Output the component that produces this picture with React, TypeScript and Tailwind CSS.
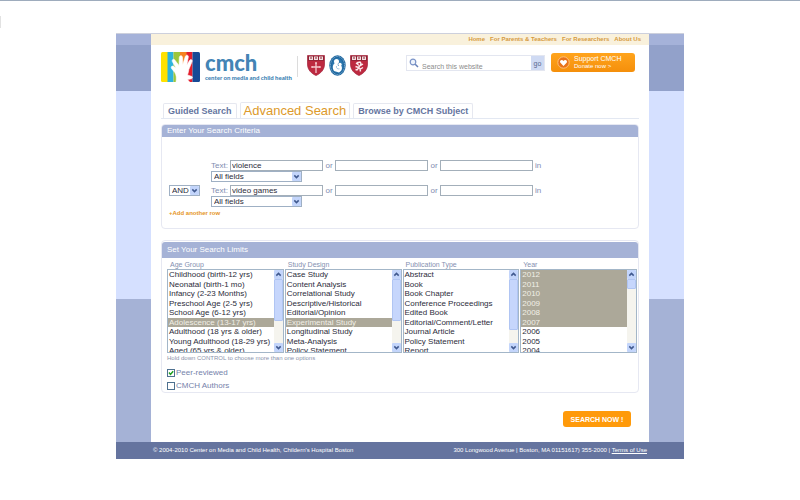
import { useState } from "react";
import type { ReactNode } from "react";

interface LimitListProps {
  id: string;
  label: string;
  options: string[];
  initial: string[];
  thumbClass: string;
}

const navLinks = ["Home", "For Parents & Teachers", "For Researchers", "About Us"];

const limits: LimitListProps[] = [
  {
    id: "age-group",
    label: "Age Group",
    options: [
      "Childhood (birth-12 yrs)",
      "Neonatal (birth-1 mo)",
      "Infancy (2-23 Months)",
      "Preschool Age (2-5 yrs)",
      "School Age (6-12 yrs)",
      "Adolescence (13-17 yrs)",
      "Adulthood (18 yrs & older)",
      "Young Adulthood (18-29 yrs)",
      "Aged (65 yrs & older)",
    ],
    initial: ["Adolescence (13-17 yrs)"],
    thumbClass: "h-[42px]",
  },
  {
    id: "study-design",
    label: "Study Design",
    options: [
      "Case Study",
      "Content Analysis",
      "Correlational Study",
      "Descriptive/Historical",
      "Editorial/Opinion",
      "Experimental Study",
      "Longitudinal Study",
      "Meta-Analysis",
      "Policy Statement",
    ],
    initial: ["Experimental Study"],
    thumbClass: "h-[42px]",
  },
  {
    id: "publication-type",
    label: "Publication Type",
    options: [
      "Abstract",
      "Book",
      "Book Chapter",
      "Conference Proceedings",
      "Edited Book",
      "Editorial/Comment/Letter",
      "Journal Article",
      "Policy Statement",
      "Report",
    ],
    initial: [],
    thumbClass: "h-[51px]",
  },
  {
    id: "year",
    label: "Year",
    options: ["2012", "2011", "2010", "2009", "2008", "2007", "2006", "2005", "2004"],
    initial: ["2012", "2011", "2010", "2009", "2008", "2007"],
    thumbClass: "h-[10px]",
  },
];

function Chevron({ up = false }: { up?: boolean }) {
  return (
    <svg viewBox="0 0 9 9" className="h-[9px] w-[9px] shrink-0" aria-hidden="true">
      <rect width="9" height="9" rx="1" fill="#c3d5fb" />
      <path
        d={up ? "M2.3 5.6 4.5 3.4 6.7 5.6" : "M2.3 3.4 4.5 5.6 6.7 3.4"}
        fill="none"
        stroke="#40598f"
        strokeWidth="1.5"
      />
    </svg>
  );
}

function DropDown({ label, options, widthClass }: { label: string; options: string[]; widthClass: string }) {
  return (
    <div className={`relative h-[11px] ${widthClass}`}>
      <select
        aria-label={label}
        className="block h-full w-full appearance-none border border-[#9fb0c4] bg-white pl-[2px] text-[8px] leading-[9px] text-[#2c2c3a]"
      >
        {options.map((o) => (
          <option key={o}>{o}</option>
        ))}
      </select>
      <span className="pointer-events-none absolute top-px right-px">
        <Chevron />
      </span>
    </div>
  );
}

function TextRow({ row, value }: { row: number; value: string }) {
  const inputClass =
    "h-[11px] w-[93px] border border-[#a3afba] bg-white px-px text-[8px] leading-[9px] text-[#2c2c3a] outline-none";
  return (
    <div>
      <div className="flex h-[11px] items-center text-[8px] leading-[9px] text-[#7f8cb0]">
        <label htmlFor={`term-${row}`} className="w-[19px]">
          Text:
        </label>
        <input id={`term-${row}`} type="text" defaultValue={value} className={inputClass} />
        <span className="w-3 text-center">or</span>
        <input aria-label="Second term" type="text" className={inputClass} />
        <span className="w-3 text-center">or</span>
        <input aria-label="Third term" type="text" className={inputClass} />
        <span className="pl-[2px]">in</span>
      </div>
      <DropDown label="Field" options={["All fields", "Title", "Abstract"]} widthClass="w-[91px]" />
    </div>
  );
}

function Panel({ title, headerClass, children }: { title: string; headerClass: string; children: ReactNode }) {
  return (
    <section className="rounded-[4px] border border-[#e6e8f2]">
      <h2 className={`flex items-center rounded-t-[3px] bg-[#a5b2d6] pl-[5px] text-[8px] leading-[10px] text-white ${headerClass}`}>
        {title}
      </h2>
      {children}
    </section>
  );
}

function LimitList({ id, label, options, initial, thumbClass }: LimitListProps) {
  return (
    <div className="min-w-0">
      <label htmlFor={id} className="block h-[9px] pl-[3px] text-[7px] leading-[9px] text-[#8590b0]">
        {label}
      </label>
      <div className="flex h-[84px] border border-[#a3b6c8]">
        <select
          id={id}
          multiple
          defaultValue={initial}
          className="block h-full min-w-0 flex-1 overflow-hidden bg-white p-0 text-[8px] outline-none [scrollbar-width:none]"
        >
          {options.map((o) => (
            <option
              key={o}
              className="min-h-0 p-0 pl-px text-[8px] leading-[9px] text-[#2c2c3a] odd:pb-px checked:bg-[linear-gradient(#aca899,#aca899)] checked:[-webkit-text-fill-color:#f1efe6]"
            >
              {o}
            </option>
          ))}
        </select>
        <div className="flex w-[9px] flex-col bg-[#f5f4ee]" aria-hidden="true">
          <Chevron up />
          <div className={`rounded-[1px] border border-[#b0c5f3] bg-[#c6d6fc] ${thumbClass}`} />
          <div className="flex-1" />
          <Chevron />
        </div>
      </div>
    </div>
  );
}

function CheckOption({ label, defaultChecked = false }: { label: string; defaultChecked?: boolean }) {
  const [checked, setChecked] = useState(defaultChecked);
  return (
    <label className="flex h-[13px] items-center gap-px text-[8px] leading-[10px] text-[#7582aa]">
      <span className="relative h-2 w-2">
        <input
          type="checkbox"
          checked={checked}
          onChange={() => setChecked(!checked)}
          className="block h-2 w-2 appearance-none border border-[#4e7190] bg-white"
        />
        {checked && (
          <svg viewBox="0 0 8 8" className="pointer-events-none absolute inset-0 h-2 w-2" aria-hidden="true">
            <path d="M2 3.6 3.5 5.4 6.2 2.3" fill="none" stroke="#21a121" strokeWidth="1.5" />
          </svg>
        )}
      </span>
      {label}
    </label>
  );
}

function HandLogo() {
  return (
    <svg viewBox="0 0 39 30" className="h-[30px] w-[39px]" aria-hidden="true">
      <clipPath id="logo-clip">
        <rect width="39" height="30" rx="1.5" />
      </clipPath>
      <g clipPath="url(#logo-clip)">
        <rect width="7" height="30" fill="#ffe100" />
        <rect x="6.5" width="6" height="30" fill="#2db3dd" />
        <rect x="12.5" width="7" height="30" fill="#9cc63c" />
        <rect x="19" width="7" height="30" fill="#f58220" />
        <rect x="25.5" width="6" height="30" fill="#e31e2d" />
        <rect x="31.5" width="8" height="30" fill="#174a96" />
      </g>
      <path
        d="M15 30C15.600 26 15.500 23.500 13.800 20.500L10.500 16.500C9.500 14.500 11.200 13.500 12.800 14.500L15 16 11.300 9.500C10.700 7.300 13 6.500 14.200 8.500L18 13.500 18.300 5.500C18.600 3.100 21.300 3.200 21.500 5.500L21.800 12.500 24.300 4.500C25.200 2.300 27.800 3 27.300 5.300L25.800 13 28.500 8.500C29.800 6.600 31.800 7.800 31 9.800L27.800 17.500C27.500 20 27 21.500 26.500 23L31 24.500C32 25.500 31 27 29.500 27L26.500 27.500 28.500 30Z"
        fill="#fff"
        stroke="#fff"
        strokeWidth=".6"
      />
    </svg>
  );
}

function Shield({ lion = false }: { lion?: boolean }) {
  return (
    <svg viewBox="0 0 18 21" className="h-[21px] w-[18px]" aria-hidden="true">
      <path d="M.5.500H17.500V9C17.500 15 13.500 18.500 9 20.500 4.500 18.500.5 15 .5 9Z" fill="#bd2940" stroke="#a12339" strokeWidth=".7" />
      <path d="M1 1H17V5.800H1Z" fill="#8e2234" />
      <path d="M2 1.500H6V5H2ZM7 1.500H11V5H7ZM12 1.500H16V5H12Z" fill="#f2dfe0" />
      <path d="M3 3H5M8 3H10M13 3H15" stroke="#8e2234" strokeWidth="1" />
      {lion ? (
        <path
          d="M6 8 8 9.500 7.500 7.500 10 7 11 8.500 10.500 10.500 13 9M10.500 10 8.500 12.500 5.500 11.500M8.500 12.500 10.500 14 13 12.500M9 12.500 7 15 5.500 14.500M10 14 10.500 16.500"
          fill="none"
          stroke="#fbeaec"
          strokeWidth="1.400"
        />
      ) : (
        <path d="M9 7.500V18M4.500 12H13.500M8 8H10M5 11V13M13 11V13" fill="none" stroke="#f4c7cd" strokeWidth="1.300" />
      )}
    </svg>
  );
}

function HospitalSeal() {
  return (
    <svg viewBox="0 0 17 21" className="h-[21px] w-[17px]" aria-hidden="true">
      <ellipse cx="8.500" cy="10.500" rx="8.200" ry="10.200" fill="#1f679f" />
      <ellipse cx="8.500" cy="10.500" rx="7" ry="9" fill="none" stroke="#8fb9da" strokeWidth="1" strokeDasharray="1 .7" />
      <ellipse cx="8.500" cy="10.500" rx="5.600" ry="7.600" fill="#2c77ae" />
      <circle cx="7.500" cy="6.500" r="2.500" fill="#fff" />
      <path d="M6 8C3.500 9.500 3.200 13 5 16L10 17.500C13 16 13.800 12.500 12 10.500L9 11 8.500 8Z" fill="#fff" />
      <circle cx="11" cy="9.500" r="1.700" fill="#fff" />
      <path d="M7.500 11C6.800 12.800 8.500 14.500 10.500 13.800" fill="none" stroke="#7fb0d4" strokeWidth=".7" />
    </svg>
  );
}

function SideBands() {
  return (
    <div className="flex w-[35px] shrink-0 flex-col">
      <div className="h-[11px] bg-[#a5b2d9]" />
      <div className="h-[46px] bg-[#92a1ca]" />
      <div className="h-[208px] bg-[#d5e0ff]" />
      <div className="flex-1 bg-[#a5b2d6]" />
    </div>
  );
}

function Header() {
  return (
    <header className="flex h-[58px] items-start pt-[7px]">
      <a href="#home" aria-label="CMCH home" className="flex">
        <HandLogo />
        <span className="flex flex-col pl-[5px] font-[Lato,sans-serif] font-black text-[#4384b5]">
          <span className="text-[22px] leading-[22px]">cmch</span>
          <span className="text-[6px] leading-[7px]">center on media and child health</span>
        </span>
      </a>
      <div className="ml-[5px] mt-[4px] h-[21px] w-px bg-[#dcdcdc]" />
      <div className="ml-[9px] mt-[3px] flex gap-[4px]">
        <Shield />
        <HospitalSeal />
        <Shield lion />
      </div>
      <form className="mt-[3px] ml-auto flex h-4 w-[139px] border border-[#e3e6f0]" onSubmit={(e) => e.preventDefault()}>
        <svg viewBox="0 0 10 10" className="mt-[2px] ml-[2px] h-[10px] w-[10px] shrink-0" aria-hidden="true">
          <circle cx="4" cy="4" r="2.800" fill="#edf3fc" stroke="#7b94c8" strokeWidth="1.200" />
          <path d="M6.200 6.200 9 9" stroke="#6680b8" strokeWidth="1.500" />
        </svg>
        <input
          type="search"
          aria-label="Search this website"
          placeholder="Search this website"
          className="min-w-0 flex-1 bg-white pt-[7px] pl-[3px] text-[7px] leading-[8px] outline-none placeholder:text-[#8c8c8c]"
        />
        <button type="submit" className="w-[13px] bg-[#cfdaf3] text-[7px] leading-[9px] text-[#58688f]">
          go
        </button>
      </form>
      <a
        href="#donate"
        className="mt-px mr-[4px] ml-[6px] flex h-[19px] w-[84px] items-center gap-[4px] rounded-[3px] bg-linear-to-b from-[#ffa41c] to-[#f58f0a] pl-[6px] text-white"
      >
        <svg viewBox="0 0 13 13" className="h-[13px] w-[13px]" aria-hidden="true">
          <circle cx="6.500" cy="6.500" r="5.700" fill="#e97318" stroke="#ffc682" strokeWidth=".9" />
          <path d="M6.500 10 3.200 6.600C2.200 4.700 4.900 2.800 6.500 4.900 8.100 2.800 10.800 4.700 9.800 6.600Z" fill="#fff" />
        </svg>
        <span className="flex flex-col">
          <span className="text-[7px] leading-[8px]">Support CMCH</span>
          <span className="text-[6px] leading-[7px]">Donate now &gt;</span>
        </span>
      </a>
    </header>
  );
}

export default function App() {
  return (
    <div className="min-h-screen border-t border-[#9eacbd] bg-white pt-8 font-['Liberation_Sans',Arial,sans-serif]">
      <div className="absolute top-4 left-0 h-3 w-px bg-[#e2e2e2]" />
      <div className="mx-auto w-full max-w-[568px]">
        <div className="flex border-t border-[#cdd0dc]">
          <SideBands />
          <main className="min-w-0 flex-1 pb-[15px]">
            <nav className="flex h-[11px] items-center justify-end gap-[5px] bg-[#f9f1dc] pr-2 text-[6px] leading-[7px] font-bold text-[#d69a3e]">
              {navLinks.map((link) => (
                <a key={link} href="#nav">
                  {link}
                </a>
              ))}
            </nav>
            <div className="px-[10px]">
              <Header />
              <div className="flex h-4 items-end gap-[3px] border-b border-[#e3e8f2] pl-[2px] text-[9px] leading-[14px] font-bold text-[#65759f]">
                <a href="#guided" className="rounded-t-[2px] border border-b-0 border-[#e6e8f0] px-[4px]">
                  Guided Search
                </a>
                <a
                  href="#advanced"
                  className="rounded-t-[2px] border border-b-0 border-[#e6e8f0] px-[3px] text-[13px] leading-[15px] font-normal text-[#dd9a2b]"
                >
                  Advanced Search
                </a>
                <a href="#browse" className="rounded-t-[2px] border border-b-0 border-[#e6e8f0] px-[4px]">
                  Browse by CMCH Subject
                </a>
              </div>

              <form onSubmit={(e) => e.preventDefault()}>
                <div className="mt-[5px]">
                  <Panel title="Enter Your Search Criteria" headerClass="h-[12px]">
                    <div className="grid grid-cols-[42px_1fr] gap-y-[3px] px-[7px] pt-[23px] pb-[11px]">
                      <div />
                      <TextRow row={1} value="violence" />
                      <DropDown label="Operator" options={["AND", "OR", "NOT"]} widthClass="w-[31px]" />
                      <TextRow row={2} value="video games" />
                      <button
                        type="button"
                        className="col-span-2 justify-self-start text-[6px] leading-[7px] font-bold text-[#e5951c]"
                      >
                        +Add another row
                      </button>
                    </div>
                  </Panel>
                </div>

                <div className="mt-[11px]">
                  <Panel title="Set Your Search Limits" headerClass="mt-px h-4">
                    <div className="pt-[2px] pr-px pl-[5px]">
                      <div className="grid grid-cols-4 gap-x-px">
                        {limits.map((limit) => (
                          <LimitList key={limit.id} {...limit} />
                        ))}
                      </div>
                      <p className="pt-px text-[6px] leading-[9px] text-[#8b93ab]">
                        Hold down CONTROL to choose more than one options
                      </p>
                      <div className="pt-[3px]">
                        <CheckOption label="Peer-reviewed" defaultChecked />
                        <CheckOption label="CMCH Authors" />
                      </div>
                    </div>
                  </Panel>
                </div>

                <div className="mt-[18px] mr-2 flex justify-end">
                  <button type="submit" className="h-4 w-[68px] rounded-[3px] bg-[#ff9a0a] text-[7px] leading-[9px] font-bold text-white">
                    SEARCH NOW !
                  </button>
                </div>
              </form>
            </div>
          </main>
          <SideBands />
        </div>
        <footer className="flex h-[17px] items-center justify-between bg-[#65749f] px-[37px] pb-px text-[6px] leading-[8px] text-white">
          <span>© 2004-2010 Center on Media and Child Health, Childern's Hospital Boston</span>
          <span>
            300 Longwood Avenue | Boston, MA 01151617) 355-2000 |{" "}
            <a href="#terms" className="underline">
              Terms of Use
            </a>
          </span>
        </footer>
      </div>
    </div>
  );
}
